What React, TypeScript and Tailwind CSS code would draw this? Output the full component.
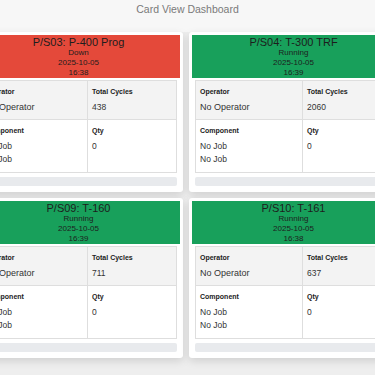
import React from "react";

type Card = {
  title: string;
  status: string;
  date: string;
  time: string;
  cycles: string;
  down?: boolean;
};

const cards: Card[] = [
  { title: "P/S03: P-400 Prog", status: "Down", date: "2025-10-05", time: "16:38", cycles: "438", down: true },
  { title: "P/S04: T-300 TRF", status: "Running", date: "2025-10-05", time: "16:39", cycles: "2060" },
  { title: "P/S09: T-160", status: "Running", date: "2025-10-05", time: "16:39", cycles: "711" },
  { title: "P/S10: T-161", status: "Running", date: "2025-10-05", time: "16:38", cycles: "637" },
];

function MachineCard({ c }: { c: Card }) {
  return (
    <div className="w-[209px] shrink-0 bg-white rounded-[3px] pt-[3px] px-[3px] pb-[6px] shadow-[0_3px_9px_rgba(0,0,0,0.13)]">
      <div
        className={
          (c.down ? "bg-[#e4493a]" : "bg-[#18a05b]") +
          " h-[43px] pt-[1px] text-center text-[#1d1d1d] flex flex-col items-center"
        }
      >
        <div className="text-[11px] leading-[12px]">{c.title}</div>
        <div className="text-[8px] leading-[10px]">{c.status}</div>
        <div className="text-[8px] leading-[10px]">{c.date}</div>
        <div className="text-[8px] leading-[10px]">{c.time}</div>
      </div>
      <div className="mx-[3px] mt-[2px] border border-[#dedede] text-[#333]">
        <div className="flex bg-[#f3f3f3] h-[39px] border-b border-[#dedede]">
          <div className="w-[107px] shrink-0 border-r border-[#dedede] pt-[6px] px-[4px]">
            <div className="text-[7px] leading-[10px] font-bold text-[#222]">Operator</div>
            <div className="mt-[4px] text-[9px] leading-[13px]">No Operator</div>
          </div>
          <div className="flex-1 pt-[6px] px-[4px]">
            <div className="text-[7px] leading-[10px] font-bold text-[#222]">Total Cycles</div>
            <div className="mt-[4px] text-[8.5px] leading-[13px]">{c.cycles}</div>
          </div>
        </div>
        <div className="flex bg-white h-[52px]">
          <div className="w-[107px] shrink-0 border-r border-[#dedede] pt-[6px] px-[4px]">
            <div className="text-[7px] leading-[10px] font-bold text-[#222]">Component</div>
            <div className="mt-[4px] text-[8.5px] leading-[13px]">No Job</div>
            <div className="text-[8.5px] leading-[13px]">No Job</div>
          </div>
          <div className="flex-1 pt-[6px] px-[4px]">
            <div className="text-[7px] leading-[10px] font-bold text-[#222]">Qty</div>
            <div className="mt-[4px] text-[8.5px] leading-[13px]">0</div>
          </div>
        </div>
      </div>
      <div className="mx-[3px] mt-[4px] h-[9px] rounded-[2px] bg-[#e8eaed]" />
    </div>
  );
}

export default function App() {
  return (
    <div
      className="w-[375px] h-[375px] overflow-hidden bg-[#eeeeee]"
      style={{ fontFamily: '"Liberation Sans", Arial, sans-serif' }}
    >
      <div className="h-[32px] bg-[#f7f7f7] pt-[2px] text-center">
        <div className="text-[10.5px] leading-[14px] text-[#7a7a7a]">Card View Dashboard</div>
      </div>
      <div className="-ml-[26px] w-[424px] grid grid-cols-[209px_209px] gap-x-[6px] gap-y-[6px]">
        {cards.map((c) => (
          <MachineCard key={c.title} c={c} />
        ))}
      </div>
    </div>
  );
}
